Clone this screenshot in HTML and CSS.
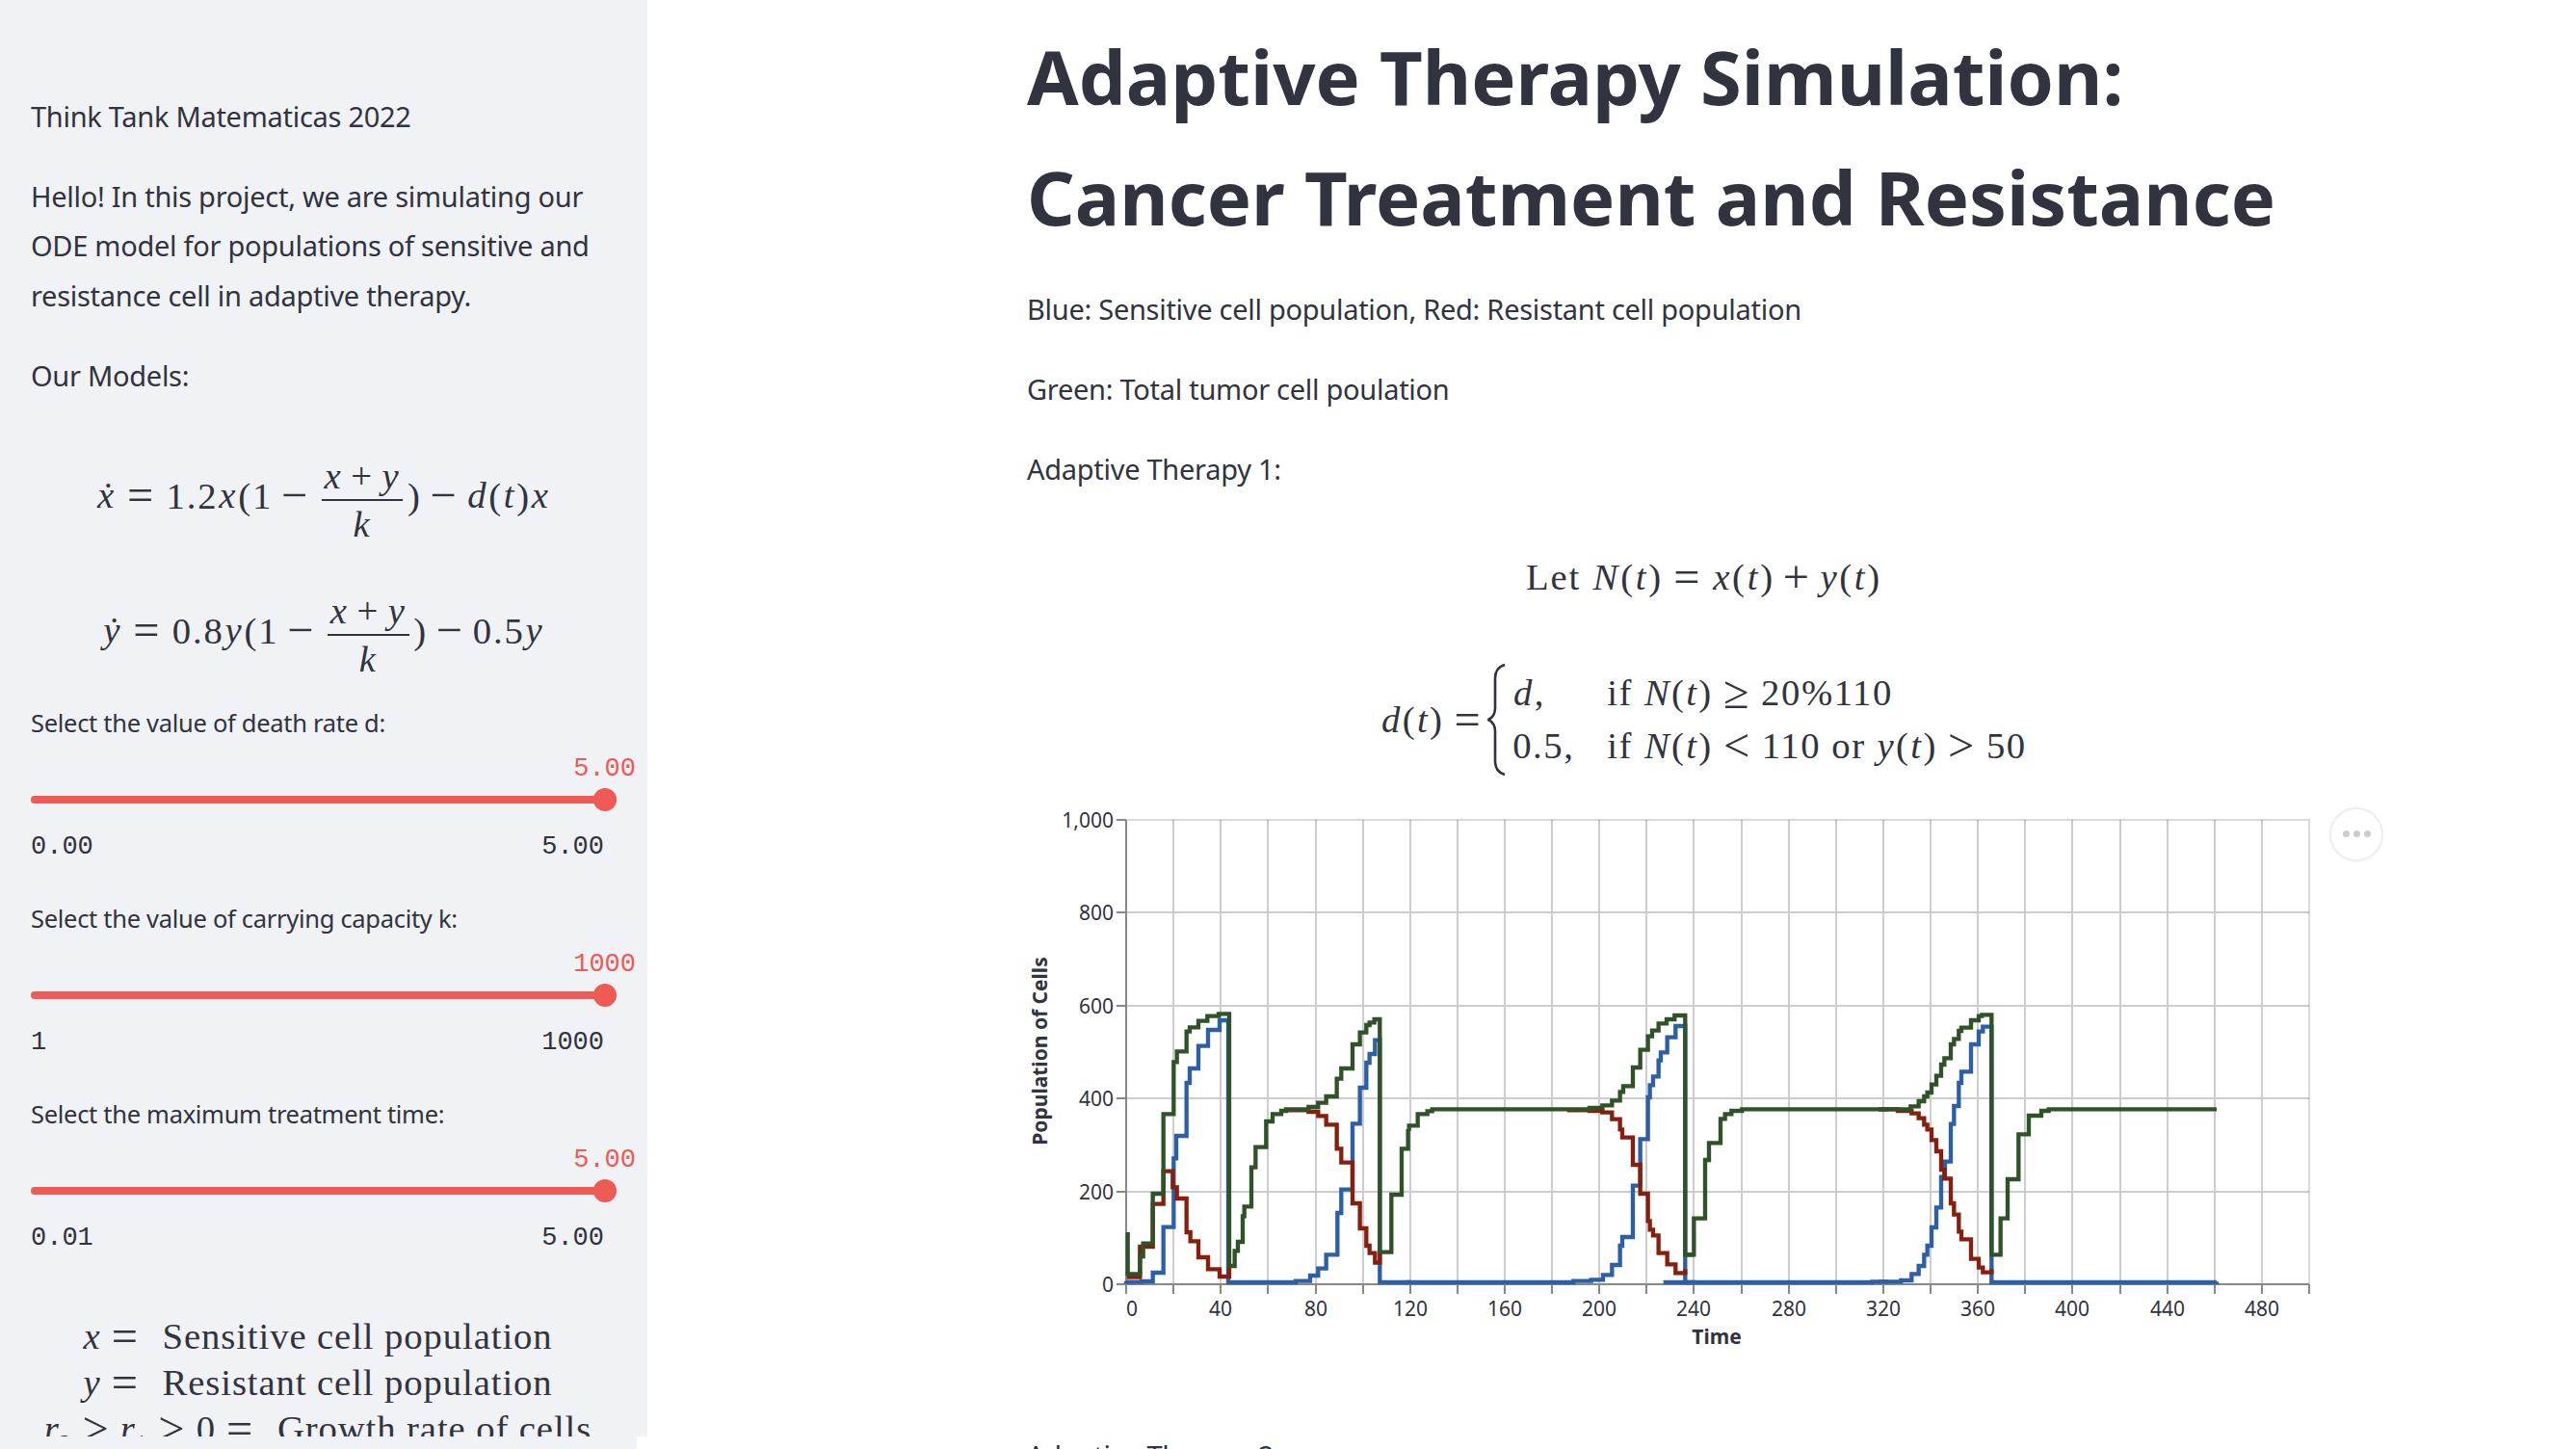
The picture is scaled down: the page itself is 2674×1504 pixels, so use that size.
FILE: index.html
```html
<!DOCTYPE html>
<html lang="en">
<head>
    <meta charset="UTF-8">
    <title>Adaptive Therapy Simulation</title>
    <link rel="stylesheet" href="styles.css">
</head>
<body>
    <aside class="sidebar">
        <div class="sidebar-scroll">
            <p>Think Tank Matematicas 2022</p>
            <p>Hello! In this project, we are simulating our ODE model for populations of sensitive and resistance cell in adaptive therapy.</p>
            <p>Our Models:</p>

            <div class="eq eq-first">
                <span><i>ẋ</i><span class="rel">=</span>1.2<i>x</i>(1<span class="bin">−</span><span class="frac"><span class="num"><i>x</i><span class="bin-sm">+</span><i>y</i></span><span class="den"><i>k</i></span></span>)<span class="bin">−</span><i>d</i>(<i>t</i>)<i>x</i></span>
            </div>
            <div class="eq eq-second">
                <span><i>ẏ</i><span class="rel">=</span>0.8<i>y</i>(1<span class="bin">−</span><span class="frac"><span class="num"><i>x</i><span class="bin-sm">+</span><i>y</i></span><span class="den"><i>k</i></span></span>)<span class="bin">−</span>0.5<i>y</i></span>
            </div>

            <div class="slider">
                <label class="slider-label">Select the value of death rate d:</label>
                <div class="slider-value">5.00</div>
                <div class="track"><span class="thumb"></span></div>
                <div class="slider-range"><span>0.00</span><span>5.00</span></div>
            </div>
            <div class="slider">
                <label class="slider-label">Select the value of carrying capacity k:</label>
                <div class="slider-value">1000</div>
                <div class="track"><span class="thumb"></span></div>
                <div class="slider-range"><span>1</span><span>1000</span></div>
            </div>
            <div class="slider">
                <label class="slider-label">Select the maximum treatment time:</label>
                <div class="slider-value">5.00</div>
                <div class="track"><span class="thumb"></span></div>
                <div class="slider-range"><span>0.01</span><span>5.00</span></div>
            </div>

            <div class="legend">
                <div><i>x</i><span class="rel">=</span><span class="gap"></span>Sensitive cell population</div>
                <div><i>y</i><span class="rel">=</span><span class="gap"></span>Resistant cell population</div>
                <div><i>r</i><sub>2</sub><span class="rel">&gt;</span><i>r</i><sub>1</sub><span class="rel">&gt;</span>0<span class="rel">=</span><span class="gap"></span>Growth rate of cells</div>
            </div>
        </div>
        <span class="corner"></span>
    </aside>

    <main class="content">
        <h1>Adaptive Therapy Simulation: Cancer Treatment and Resistance</h1>
        <p>Blue: Sensitive cell population, Red: Resistant cell population</p>
        <p>Green: Total tumor cell poulation</p>
        <p>Adaptive Therapy 1:</p>

        <div class="eq eq-let"><span>Let <i>N</i>(<i>t</i>)<span class="rel">=</span><i>x</i>(<i>t</i>)<span class="bin">+</span><i>y</i>(<i>t</i>)</span></div>

        <div class="cases">
            <span class="cases-lhs"><i>d</i>(<i>t</i>)<span class="rel">=</span></span>
            <svg class="brace" viewBox="0 0 20 116"><path d="M18 1C11 3 8 8 8 15V46C8 52 5 56 1 58C5 60 8 64 8 70V101C8 108 11 113 18 115" /></svg>
            <div class="cases-grid">
                <span><i>d</i>,</span><span>if <i>N</i>(<i>t</i>)<span class="rel">≥</span>20%110</span>
                <span>0.5,</span><span>if <i>N</i>(<i>t</i>)<span class="rel">&lt;</span>110 or <i>y</i>(<i>t</i>)<span class="rel">&gt;</span>50</span>
            </div>
        </div>

        <div class="chart">
            <svg class="chart-svg" viewBox="1066 830 1340 580" width="1340" height="580">
                <path class="grid" d="M1218 852V1334M1267 852V1334M1316 852V1334M1366 852V1334M1415 852V1334M1464 852V1334M1513 852V1334M1562 852V1334M1611 852V1334M1660 852V1334M1709 852V1334M1758 852V1334M1808 852V1334M1857 852V1334M1906 852V1334M1955 852V1334M2004 852V1334M2053 852V1334M2102 852V1334M2151 852V1334M2201 852V1334M2250 852V1334M2299 852V1334M2348 852V1334M1169 948H2397M1169 1045H2397M1169 1141H2397M1169 1238H2397" />
                <path class="frame" d="M1169 852H2397V1334" />
                <path class="axis" d="M1169 852V1334H2397M1159 852H1169M1159 948H1169M1159 1045H1169M1159 1141H1169M1159 1238H1169M1159 1334H1169M1169 1334V1344M1218 1334V1344M1267 1334V1344M1316 1334V1344M1366 1334V1344M1415 1334V1344M1464 1334V1344M1513 1334V1344M1562 1334V1344M1611 1334V1344M1660 1334V1344M1709 1334V1344M1758 1334V1344M1808 1334V1344M1857 1334V1344M1906 1334V1344M1955 1334V1344M2004 1334V1344M2053 1334V1344M2102 1334V1344M2151 1334V1344M2201 1334V1344M2250 1334V1344M2299 1334V1344M2348 1334V1344M2397 1334V1344" />

                <!-- traced in 3x coords, so each run of the curve has its own origin -->
                <g class="blue">
                    <path transform="translate(1165 1040) scale(.3333)" d="M12 872V875H60V873H95V846H128V704H160V490H168V420H200V255H210V210H237V140H267V90H303V60H330V876H540V872H585V855H610V833H635V790H670V660H682V587H717V382H740V270H760V192H770V165H787V122H802V876H900" />
                    <path transform="translate(1460 1040) scale(.3333)" d="M0 876H520V872H575V868H612V853H640V822H665V762H672V735H705V575H728V430H752V300H758V262H768V235H785V185H792V160H812V113H838V78H868V876H900" />
                    <path transform="translate(1660 1040) scale(.3333)" d="M200 876H850V874H900" />
                    <path transform="translate(1950 1040) scale(.3333)" d="M0 874H70V870H103V850H125V825H142V790H152V762H165V705H180V643H195V548H207V500H225V383H235V327H250V255H258V220H288V135H312V95H325V80H352V876H1053V874" />
                </g>
                <g class="red">
                    <path transform="translate(1165 1040) scale(.3333)" d="M15 860H55V765H95V632H128V530H157V580H170V615H200V720H212V748H237V798H267V835H303V858H333V825M510 340H580V345H610V358H635V385H668V460H682V503H717V630H740V708H760V762H770V785H787V815H802V782" />
                    <path transform="translate(1460 1040) scale(.3333)" d="M500 340H570V342H610V347H640V368H665V400H672V425H705V510H728V600H752V685H758V712H768V730H785V785H812V820H838V847H868V835" />
                    <path transform="translate(1950 1040) scale(.3333)" d="M0 337H60V342H103V350H125V365H142V385H152V400H165V433H180V468H195V525H205V553H225V630H235V665H250V718H258V742H288V803H312V830H325V845H352V835" />
                </g>
                <g class="green">
                    <path transform="translate(1165 1040) scale(.3333)" d="M17 720V850H55V795H65V755H95V600H128V352H160V190H170V157H200V95H210V82H237V62H265V47H300V40H333V825H350V778H360V750H375V670H380V640H402V518H415V455H448V375H468V352H495V342H510V337H580V330H610V317H635V297H668V242H682V210H717V135H740V98H760V75H770V67H785V57H802V782H838V603H870V460H890V398" />
                    <path transform="translate(1460 1040) scale(.3333)" d="M5 398H8V388H35V352H65V343H80V337H570V333H610V325H640V310H665V283H675V265H705V207H728V152H752V110H765V92H785V70H810V57H835V45H868V790H895" />
                    <path transform="translate(1660 1040) scale(.3333)" d="M268 790H295V677H330V495H342V442H378V367H392V352H412V342H445V337H900" />
                    <path transform="translate(1950 1040) scale(.3333)" d="M0 337H100V328H125V312H142V297H152V285H165V260H180V233H195V198H205V178H225V135H235V118H250V93H258V83H288V60H312V47H322V43H352V790H380V677H402V555H436V415H468V357H507V342H530V337H1053" />
                </g>

                <g class="y-labels">
                    <text x="1156" y="860">1,000</text>
                    <text x="1156" y="956">800</text>
                    <text x="1156" y="1053">600</text>
                    <text x="1156" y="1149">400</text>
                    <text x="1156" y="1246">200</text>
                    <text x="1156" y="1342">0</text>
                </g>
                <g class="x-labels">
                    <text class="first" x="1169" y="1367">0</text>
                    <text x="1267" y="1367">40</text>
                    <text x="1366" y="1367">80</text>
                    <text x="1464" y="1367">120</text>
                    <text x="1562" y="1367">160</text>
                    <text x="1660" y="1367">200</text>
                    <text x="1758" y="1367">240</text>
                    <text x="1857" y="1367">280</text>
                    <text x="1955" y="1367">320</text>
                    <text x="2053" y="1367">360</text>
                    <text x="2151" y="1367">400</text>
                    <text x="2250" y="1367">440</text>
                    <text x="2348" y="1367">480</text>
                </g>
                <text class="axis-title" x="1782" y="1396">Time</text>
                <text class="axis-title" transform="translate(1087 1092) rotate(-90)">Population of Cells</text>
            </svg>
            <button class="chart-menu"><span></span><span></span><span></span></button>
        </div>

        <p class="next">Adaptive Therapy 2:</p>
    </main>
</body>
</html>
```

FILE: styles.css
```css
html, body {
    margin: 0;
    height: 1504px;
    overflow: hidden;
}

body {
    display: flex;
    background-color: #fff;
    color: #31333f;
    font-family: "Noto Sans", Arial, sans-serif;
    font-size: 29px;
}

p {
    margin: 0 0 32px;
    line-height: 51.2px;
    letter-spacing: -.28px;
}

/* sidebar */
.sidebar {
    position: relative;
    flex: none;
    width: 672px;
    background-color: #f0f2f6;
}

.sidebar-scroll {
    height: 1491px;
    overflow: hidden;
    box-sizing: border-box;
    padding: 95px 32px 0;
}

.corner {
    position: absolute;
    right: 0;
    bottom: 0;
    width: 11px;
    height: 13px;
    background-color: #fff;
}

/* math */
.eq, .cases, .legend {
    font-family: "Liberation Serif", serif;
    font-size: 38.7px;
}

.eq i, .cases i {
    padding: 0 .02em;
}

.eq {
    display: flex;
    justify-content: center;
    align-items: center;
    white-space: nowrap;
    letter-spacing: .05em;
}

.eq-first {
    height: 112px;
    margin-top: 47.6px;
}

.eq-second {
    height: 112px;
    margin-top: 28px;
}

/* katex draws these wider than the serif does */
.rel, .bin {
    font-size: 1.25em;
    line-height: 0;
    vertical-align: -.06em;
}

.rel {
    margin: 0 .23em;
}

.bin {
    margin: 0 .18em;
}

.bin-sm {
    margin: 0 .2em;
}

.gap {
    display: inline-block;
    width: .35em;
}

.frac {
    display: inline-flex;
    flex-direction: column;
    align-items: center;
    vertical-align: middle;
    margin: 0 .12em 0 .1em;
}

.num {
    padding: 0 2px;
    line-height: 48px;
    border-bottom: 2px solid #31333f;
}

.den {
    line-height: 48px;
}

/* sliders */
.slider {
    width: 595px;
    margin-bottom: 39px;
}

.eq-second + .slider {
    margin-top: 17px;
}

.slider-label {
    display: block;
    font-size: 25.5px;
    line-height: 36px;
    letter-spacing: -.3px;
}

.slider-value {
    margin: 13px -33px 0 0;
    text-align: right;
    color: #ef5a55;
    font-family: "Liberation Mono", monospace;
    font-size: 27px;
    line-height: 34px;
}

.track {
    display: flex;
    justify-content: flex-end;
    align-items: center;
    height: 8px;
    margin: 11px -13px 0 0;
    border-radius: 4px;
    background-color: #ef5a55;
}

.thumb {
    flex: none;
    width: 24px;
    height: 24px;
    border-radius: 50%;
    background-color: #ef5a55;
}

.slider-range {
    display: flex;
    justify-content: space-between;
    margin-top: 28px;
    font-family: "Liberation Mono", monospace;
    font-size: 27px;
    line-height: 34px;
}

.legend {
    margin: 61px -32px 0;
    padding-right: 12px;
    text-align: center;
    line-height: 48px;
    letter-spacing: .9px;
    white-space: nowrap;
}

.legend sub {
    font-size: .6em;
    line-height: 0;
}

/* main column */
.content {
    flex: none;
    width: 1405px;
    margin-left: 394px;
    padding-top: 17px;
}

h1 {
    margin: 0 0 29px;
    font-size: 77.6px;
    font-weight: 700;
    line-height: 124.5px;
}

.eq-let {
    height: 48px;
    margin-top: 62px;
}

.cases {
    display: flex;
    justify-content: center;
    align-items: center;
    height: 116px;
    margin-top: 66px;
    white-space: nowrap;
    letter-spacing: .04em;
}

.brace {
    flex: none;
    width: 20px;
    height: 116px;
    margin-right: 6px;
    fill: none;
    stroke: #31333f;
    stroke-width: 2.6;
}

.cases-lhs .rel {
    margin-right: .12em;
}

.cases-grid {
    display: grid;
    grid-template-columns: 98px auto;
    grid-auto-rows: 55px;
    align-items: center;
}

/* chart */
.chart {
    position: relative;
    margin-top: 24px;
}

.chart-svg {
    display: block;
}

.grid {
    fill: none;
    stroke: rgba(90, 90, 100, .3);
    stroke-width: 2;
}

.frame {
    fill: none;
    stroke: rgba(0, 0, 0, .14);
    stroke-width: 2;
}

.axis {
    fill: none;
    stroke: #888;
    stroke-width: 2;
}

.blue path, .red path, .green path {
    fill: none;
    stroke-width: 13;
}

.blue path {
    stroke: #2c5fa5;
}

.red path {
    stroke: #861f0e;
}

.green path {
    stroke: #2f5228;
}

.y-labels text, .x-labels text {
    fill: #31333f;
    font-size: 21px;
}

.y-labels text {
    text-anchor: end;
}

.x-labels text {
    text-anchor: middle;
}

.x-labels .first {
    text-anchor: start;
}

.axis-title {
    fill: #31333f;
    font-size: 21px;
    font-weight: 700;
    text-anchor: middle;
}

.chart-menu {
    position: absolute;
    top: 9px;
    left: 1352px;
    display: flex;
    justify-content: center;
    align-items: center;
    gap: 4px;
    width: 56px;
    height: 56px;
    padding: 0;
    border: 2px solid #eee;
    border-radius: 50%;
    background-color: #fff;
    box-shadow: 0 1px 3px rgba(0, 0, 0, .04);
}

.chart-menu span {
    width: 7px;
    height: 7px;
    border-radius: 50%;
    background-color: #ccc;
}

.next {
    margin-top: 76px;
}
```
